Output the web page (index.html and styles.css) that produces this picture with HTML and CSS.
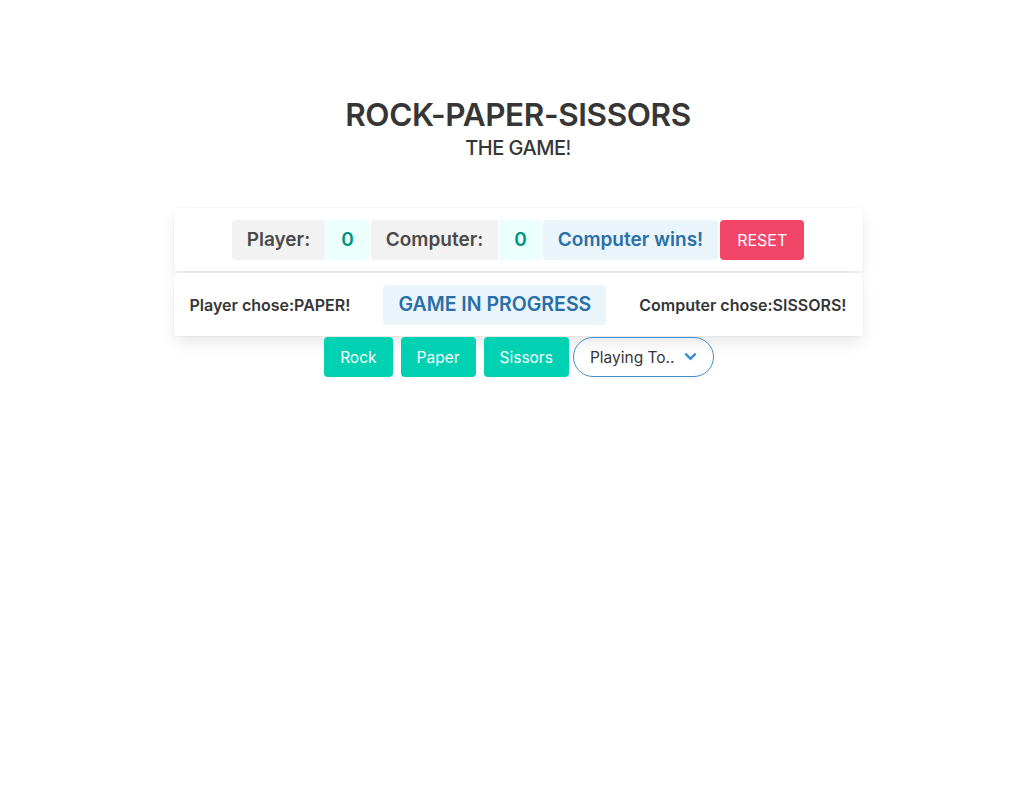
FILE: index.html
```html
<!DOCTYPE html>
<html lang="en">
<head>
<meta charset="utf-8">
<title>Rock Paper Sissors</title>
<link rel="stylesheet" href="styles.css">
</head>
<body>
<main class="page">
  <header class="hero">
    <h1 class="title">ROCK-PAPER-SISSORS</h1>
    <p class="subtitle"><span class="strong">THE GAME</span>!</p>
  </header>

  <section class="board">
    <div class="box score-box">
      <div class="tags addons">
        <span class="tag tag-gray">Player:</span>
        <span class="tag tag-teal">0</span>
      </div>
      <div class="tags addons">
        <span class="tag tag-gray">Computer:</span>
        <span class="tag tag-teal">0</span>
      </div>
      <span class="tag tag-blue">Computer wins!</span>
      <button class="btn btn-danger">RESET</button>
    </div>

    <div class="box status-box">
      <span class="choice">Player chose:PAPER!</span>
      <span class="tag tag-blue tag-status">GAME IN PROGRESS</span>
      <span class="choice">Computer chose:SISSORS!</span>
    </div>

    <div class="controls">
      <button class="btn btn-primary">Rock</button>
      <button class="btn btn-primary">Paper</button>
      <button class="btn btn-primary">Sissors</button>
      <div class="select">
        <span class="select-label">Playing To..</span>
        <span class="chevron"></span>
      </div>
    </div>
  </section>
</main>
</body>
</html>
```

FILE: styles.css
```css
* {
  box-sizing: border-box;
}

html, body {
  margin: 0;
  padding: 0;
  background: #ffffff;
}

body {
  font-family: Inter, "Noto Sans", "Liberation Sans", sans-serif;
  color: #4a4a4a;
}

.page {
  padding-top: 97px;
}

.hero {
  text-align: center;
}

.title {
  margin: 0;
  font-size: 31.5px;
  line-height: 36px;
  font-weight: 600;
  letter-spacing: -0.4px;
  color: #363636;
}

.subtitle {
  margin: 3px 0 0 0;
  font-size: 20px;
  line-height: 25px;
  font-weight: 400;
  letter-spacing: -0.5px;
  color: #363636;
}

.strong {
  font-weight: 500;
}

.board {
  width: 689px;
  margin: 47px auto 0 auto;
}

.box {
  background: #ffffff;
  border-radius: 3px;
  box-shadow: 0 0.5em 1em -0.125em rgba(10, 10, 10, 0.1), 0 0 0 1px rgba(10, 10, 10, 0.02);
  display: flex;
  align-items: center;
  height: 63px;
  padding: 0 16px;
}

.score-box {
  justify-content: center;
}

.status-box {
  margin-top: 2px;
  justify-content: space-between;
}

.tags {
  display: flex;
}

.addons {
  margin-right: 1px;
}

.addons + .addons {
  margin-left: 1px;
}

.addons .tag:first-child {
  border-top-right-radius: 0;
  border-bottom-right-radius: 0;
}

.addons .tag:last-child {
  border-top-left-radius: 0;
  border-bottom-left-radius: 0;
  margin-left: 1px;
}

.tag {
  display: inline-flex;
  align-items: center;
  justify-content: center;
  height: 40px;
  padding: 0 15px;
  border-radius: 4px;
  font-size: 19px;
  font-weight: 600;
  line-height: 1;
  white-space: nowrap;
}

.tag-gray {
  background: #f2f2f2;
  color: #4a4a4a;
}

.tag-teal {
  background: #ebfffc;
  color: #00947e;
}

.tag-blue {
  background: #eaf4fb;
  color: #296fa8;
}

.tag-status {
  font-size: 19.5px;
  padding: 0 15px;
}

.choice {
  font-size: 16px;
  font-weight: 600;
  color: #363636;
  white-space: nowrap;
}

.btn {
  font-family: inherit;
  height: 40px;
  padding: 0 16px;
  border: none;
  border-radius: 4px;
  font-size: 15.5px;
  font-weight: 400;
  color: #ffffff;
  cursor: pointer;
  white-space: nowrap;
}

.btn-danger {
  background: #f14668;
  margin-left: 2px;
  padding: 0 17px;
  font-size: 16px;
}

.btn-primary {
  background: #00d1b2;
}

.controls {
  display: flex;
  justify-content: center;
  align-items: center;
  gap: 8px;
  margin-top: 1px;
  padding-left: 2px;
}

.select {
  margin-left: -4px;
  width: 141px;
  height: 40px;
  border: 1px solid #3e8ed0;
  border-radius: 9999px;
  display: flex;
  align-items: center;
  justify-content: space-between;
  padding: 0 18px 0 16px;
  font-size: 15.5px;
  color: #363636;
}

.chevron {
  display: block;
  width: 9px;
  height: 9px;
  border: 3px solid #3e8ed0;
  border-top: 0;
  border-right: 0;
  transform: translateY(-3px) rotate(-45deg);
  border-radius: 1px;
}
```
